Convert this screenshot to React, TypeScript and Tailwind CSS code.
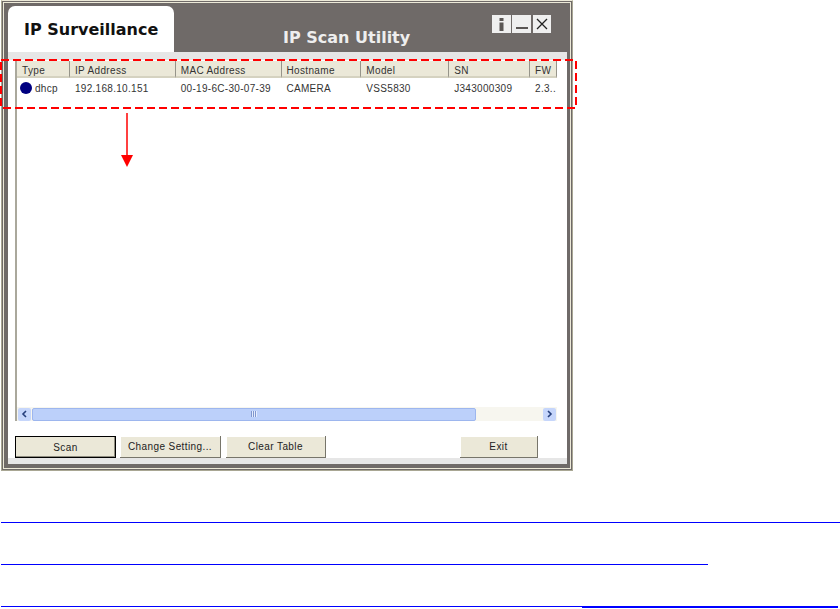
const columns = [
  { label: "Type", width: "w-[53px]" },
  { label: "IP Address", width: "w-[106px]" },
  { label: "MAC Address", width: "w-[106px]" },
  { label: "Hostname", width: "w-[80px]" },
  { label: "Model", width: "w-[88px]" },
  { label: "SN", width: "w-[81px]" },
  { label: "FW", width: "w-[27px]" },
];

const cells = [
  { text: "192.168.10.151", width: "w-[106px]" },
  { text: "00-19-6C-30-07-39", width: "w-[106px]" },
  { text: "CAMERA", width: "w-[80px]" },
  { text: "VSS5830", width: "w-[88px]" },
  { text: "J343000309", width: "w-[81px]" },
  { text: "2.3..", width: "w-[27px]" },
];

const ActionButton = ({ label, width, active }: { label: string; width: string; active?: boolean }) => (
  <button
    className={`block ${width} h-[22px] bg-[#ebe8d8] text-[10px] tracking-[0.4px] text-[#222] ${
      active
        ? "border border-black shadow-[inset_-1px_-1px_0_#8f8d80]"
        : "border-r border-b border-[#77756a] shadow-[inset_1px_1px_0_#fff]"
    }`}
  >
    {label}
  </button>
);

const App = () => {
  return (
    <div className="relative w-[840px] h-[609px] overflow-hidden bg-white font-['Liberation_Sans',sans-serif]">
      <div className="ml-[1px] w-[572px] h-[471px] border border-[#a9a794] border-t-[#ece9d8] bg-[#6f6a68] p-[1px]">
        <div className="flex flex-col h-full border border-[#ece9d8] pl-[4px] pr-[3px] pt-[3px]">
          <div className="flex h-[46px] shrink-0">
            <div className="flex w-[166px] items-center rounded-t-[7px] bg-white pl-[16px] pt-[2px] font-['DejaVu_Sans',sans-serif] text-[16px] font-bold text-[#111]">
              IP Surveillance
            </div>
            <div className="ml-[109px] pt-[20px] font-['DejaVu_Sans',sans-serif] text-[16px] font-bold leading-[24px] text-[#eeeeee]">
              IP Scan Utility
            </div>
            <div className="ml-auto mr-[16px] mt-[9px] flex h-[18px] gap-[1px]">
              <div className="flex w-[19px] items-center justify-center bg-[#efefef]">
                <svg width="5" height="13" viewBox="0 0 5 13">
                  <rect x="0.5" y="0" width="4" height="3" fill="#5a5654" />
                  <rect x="0.5" y="4.5" width="4" height="8.5" fill="#5a5654" />
                </svg>
              </div>
              <div className="mr-[1px] flex w-[19px] items-end justify-center bg-[#efefef] pb-[4px]">
                <div className="h-[2px] w-[12px] bg-[#5a5654]" />
              </div>
              <div className="flex w-[18px] items-center justify-center bg-[#efefef]">
                <svg width="12" height="12" viewBox="0 0 12 12" fill="none" stroke="#222" strokeWidth="1.3">
                  <path d="M1 1 L11 11 M11 1 L1 11" />
                </svg>
              </div>
            </div>
          </div>

          <div className="flex h-[412px] w-[559px] shrink-0 flex-col border-b-[6px] border-t-[8px] border-b-[#e6e6e6] border-t-[#e6e6e6] bg-white">
            <div className="ml-[7px] mt-[1px] flex h-[348px] w-[542px] flex-col border-l-2 border-[#aaa89c]">
              <div className="flex h-[17px] bg-[#ebe8d8]">
                {columns.map((col) => (
                  <div
                    key={col.label}
                    className={`${col.width} border-r border-r-[#96948a] border-b-2 border-b-[#d5d2c0] pl-[5px] text-[10px] leading-[19px] tracking-[0.35px] text-[#333]`}
                  >
                    {col.label}
                  </div>
                ))}
              </div>
              <div className="flex h-[20px] items-center text-[10px] tracking-[0.3px] text-[#333]">
                <div className="flex w-[53px] items-center pl-[3px]">
                  <span className="mr-[3px] h-[12px] w-[12px] rounded-full bg-[#000080]" />
                  dhcp
                </div>
                {cells.map((cell) => (
                  <div key={cell.text} className={`${cell.width} whitespace-nowrap pl-[5px]`}>
                    {cell.text}
                  </div>
                ))}
              </div>
            </div>

            <div className="ml-[7px] flex h-[14px] w-[542px] items-center border-l-2 border-[#aaa89c] bg-[#f7f6ef] pl-[1px]">
              <div className="flex h-[13px] w-[13px] items-center justify-center rounded-[2px] bg-[#c6d6fb]">
                <svg width="7" height="8" viewBox="0 0 7 8" fill="none" stroke="#27407c" strokeWidth="1.6">
                  <path d="M5 1 L2 4 L5 7" />
                </svg>
              </div>
              <div className="ml-[1px] flex h-[13px] w-[444px] items-center justify-center rounded-[2px] border border-[#9db6ee] bg-[#bcd0fa]">
                <div className="h-[6px] w-[6px] bg-[repeating-linear-gradient(90deg,#7f97cf_0,#7f97cf_1px,#e6edfd_1px,#e6edfd_2px)]" />
              </div>
              <div className="ml-auto mr-[1px] flex h-[13px] w-[13px] items-center justify-center rounded-[2px] bg-[#c6d6fb]">
                <svg width="7" height="8" viewBox="0 0 7 8" fill="none" stroke="#27407c" strokeWidth="1.6">
                  <path d="M2 1 L5 4 L2 7" />
                </svg>
              </div>
            </div>

            <div className="ml-[7px] mt-[15px] flex items-start">
              <ActionButton label="Scan" width="w-[101px]" active />
              <div className="ml-[4px]">
                <ActionButton label="Change Setting..." width="w-[101px]" />
              </div>
              <div className="ml-[5px]">
                <ActionButton label="Clear Table" width="w-[100px]" />
              </div>
              <div className="ml-[134px]">
                <ActionButton label="Exit" width="w-[78px]" />
              </div>
            </div>
          </div>
        </div>
      </div>

      <div className="mt-[51px] ml-[1px] h-[1px] w-[839px] bg-[#0000ff]" />
      <div className="mt-[41px] ml-[1px] h-[1px] w-[707px] bg-[#0000ff]" />
      <div className="mt-[41px] ml-[1px] flex">
        <div className="h-[1px] w-[581px] bg-[#0000ff]" />
        <div className="h-[2px] w-[256px] bg-[#0000ff]" />
      </div>

      {/* red callout over the table header */}
      <svg className="absolute left-0 top-0" width="580" height="170" viewBox="0 0 580 170" fill="none">
        <path d="M1 60 H576 V108 H1 Z" stroke="#ff0000" strokeWidth="2" strokeDasharray="8 4" />
        <path d="M127 113 V158" stroke="#ff0000" strokeWidth="1.5" />
        <path d="M121 155 H133 L127 167 Z" fill="#ff0000" />
      </svg>
    </div>
  );
};

export default App;
